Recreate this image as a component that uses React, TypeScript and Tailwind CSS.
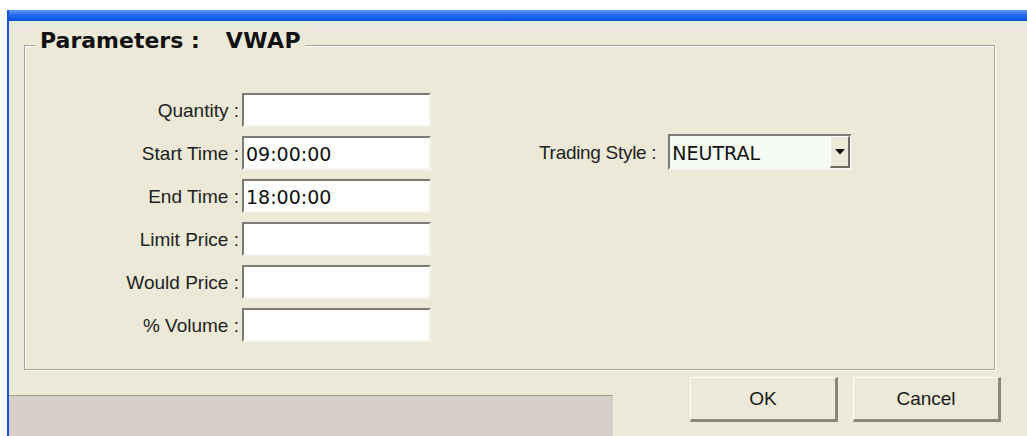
import React from "react";

const fields = [
  { label: "Quantity :", value: "" },
  { label: "Start Time :", value: "09:00:00" },
  { label: "End Time :", value: "18:00:00" },
  { label: "Limit Price :", value: "" },
  { label: "Would Price :", value: "" },
  { label: "% Volume :", value: "" },
];

const labelFont = { fontFamily: '"Liberation Sans", Arial, sans-serif' };
const valueFont = { fontFamily: '"DejaVu Sans", "Liberation Sans", sans-serif' };

function SunkenBox({ value }: { value: string }) {
  return (
    <div
      className="h-[34px] flex items-center bg-white border-2 border-t-[#7c7b76] border-l-[#7c7b76] border-b-[#f4f3ee] border-r-[#f4f3ee] pl-[2px] pt-[2px] text-[19px] text-[#111]"
      style={valueFont}
    >
      {value}
    </div>
  );
}

function XpButton({ children }: { children: React.ReactNode }) {
  return (
    <button
      className="w-[148px] h-[45px] flex items-center justify-center pt-[2px] bg-[#ece9d8] border-t border-l border-t-[#ffffff] border-l-[#ffffff] border-b-[3px] border-r-[3px] border-b-[#8a8678] border-r-[#8a8678] text-[19px] text-[#1a1a1a]"
      style={labelFont}
    >
      {children}
    </button>
  );
}

export default function App() {
  return (
    <div
      className="w-[1027px] h-[436px] bg-white flex flex-col pt-[10px] pl-[7px] overflow-hidden"
      style={labelFont}
    >
      <div className="flex-1 flex flex-col border-l-2 border-l-[#1b52d9] bg-[#ece9d8]">
        {/* caption strip */}
        <div className="h-[11px] bg-gradient-to-b from-[#5a98f7] via-[#1f68ee] to-[#0650e0]" />
        <div className="h-[6px] bg-[#e3ebda]" />
        <div className="h-[5px] bg-[#f2e6de]" />

        {/* parameter group */}
        <div className="relative ml-[15px] mt-[13px] w-[971px] h-[325px] border border-[#a9a598] shadow-[inset_1px_1px_0_#ffffff,1px_1px_0_#ffffff]">
          <div
            className="absolute left-[11px] top-[-18px] px-[4px] bg-[#ece9d8] flex gap-[26px] text-[22px] leading-[25px] font-bold text-[#111]"
            style={{ fontFamily: '"DejaVu Sans", "Liberation Sans", sans-serif' }}
          >
            <span>Parameters :</span>
            <span className="tracking-[0.5px]">VWAP</span>
          </div>

          <div className="flex items-start pt-[47px]">
            <div className="grid grid-cols-[214px_189px] gap-x-[3px] gap-y-[9px]">
              {fields.map((f) => (
                <React.Fragment key={f.label}>
                  <div className="h-[34px] flex items-center justify-end pt-[3px] text-[19px] text-[#222]">
                    {f.label}
                  </div>
                  <SunkenBox value={f.value} />
                </React.Fragment>
              ))}
            </div>

            <div className="ml-[108px] mt-[41px] flex items-center gap-[12px]">
              <span className="text-[19px] text-[#222] tracking-[-0.3px] pt-[3px]">Trading Style :</span>
              <div className="w-[184px] h-[36px] flex items-center justify-between border-2 border-t-[#7c7b76] border-l-[#7c7b76] border-b-[#f4f3ee] border-r-[#f4f3ee] bg-[#f6faf4]">
                <span className="pl-[2px] pt-[2px] text-[19px] text-[#111]" style={valueFont}>
                  NEUTRAL
                </span>
                <div className="w-[20px] h-[32px] flex items-center justify-center bg-[#ece9d8] border-t border-l border-t-[#ffffff] border-l-[#ffffff] border-b-2 border-r-2 border-b-[#6f6d64] border-r-[#6f6d64]">
                  <svg width="10" height="6" viewBox="0 0 10 6">
                    <polygon points="0,0 10,0 5,5.5" fill="#111" />
                  </svg>
                </div>
              </div>
            </div>
          </div>
        </div>

        {/* bottom strip with status pane and buttons */}
        <div className="flex-1 flex items-start">
          <div className="self-end w-[604px] h-[41px] bg-[#d6cfc8] border-t border-t-[#a29c90]" />
          <div className="ml-[77px] mt-[7px] flex gap-[15px]">
            <XpButton>OK</XpButton>
            <XpButton>Cancel</XpButton>
          </div>
        </div>
      </div>
    </div>
  );
}
